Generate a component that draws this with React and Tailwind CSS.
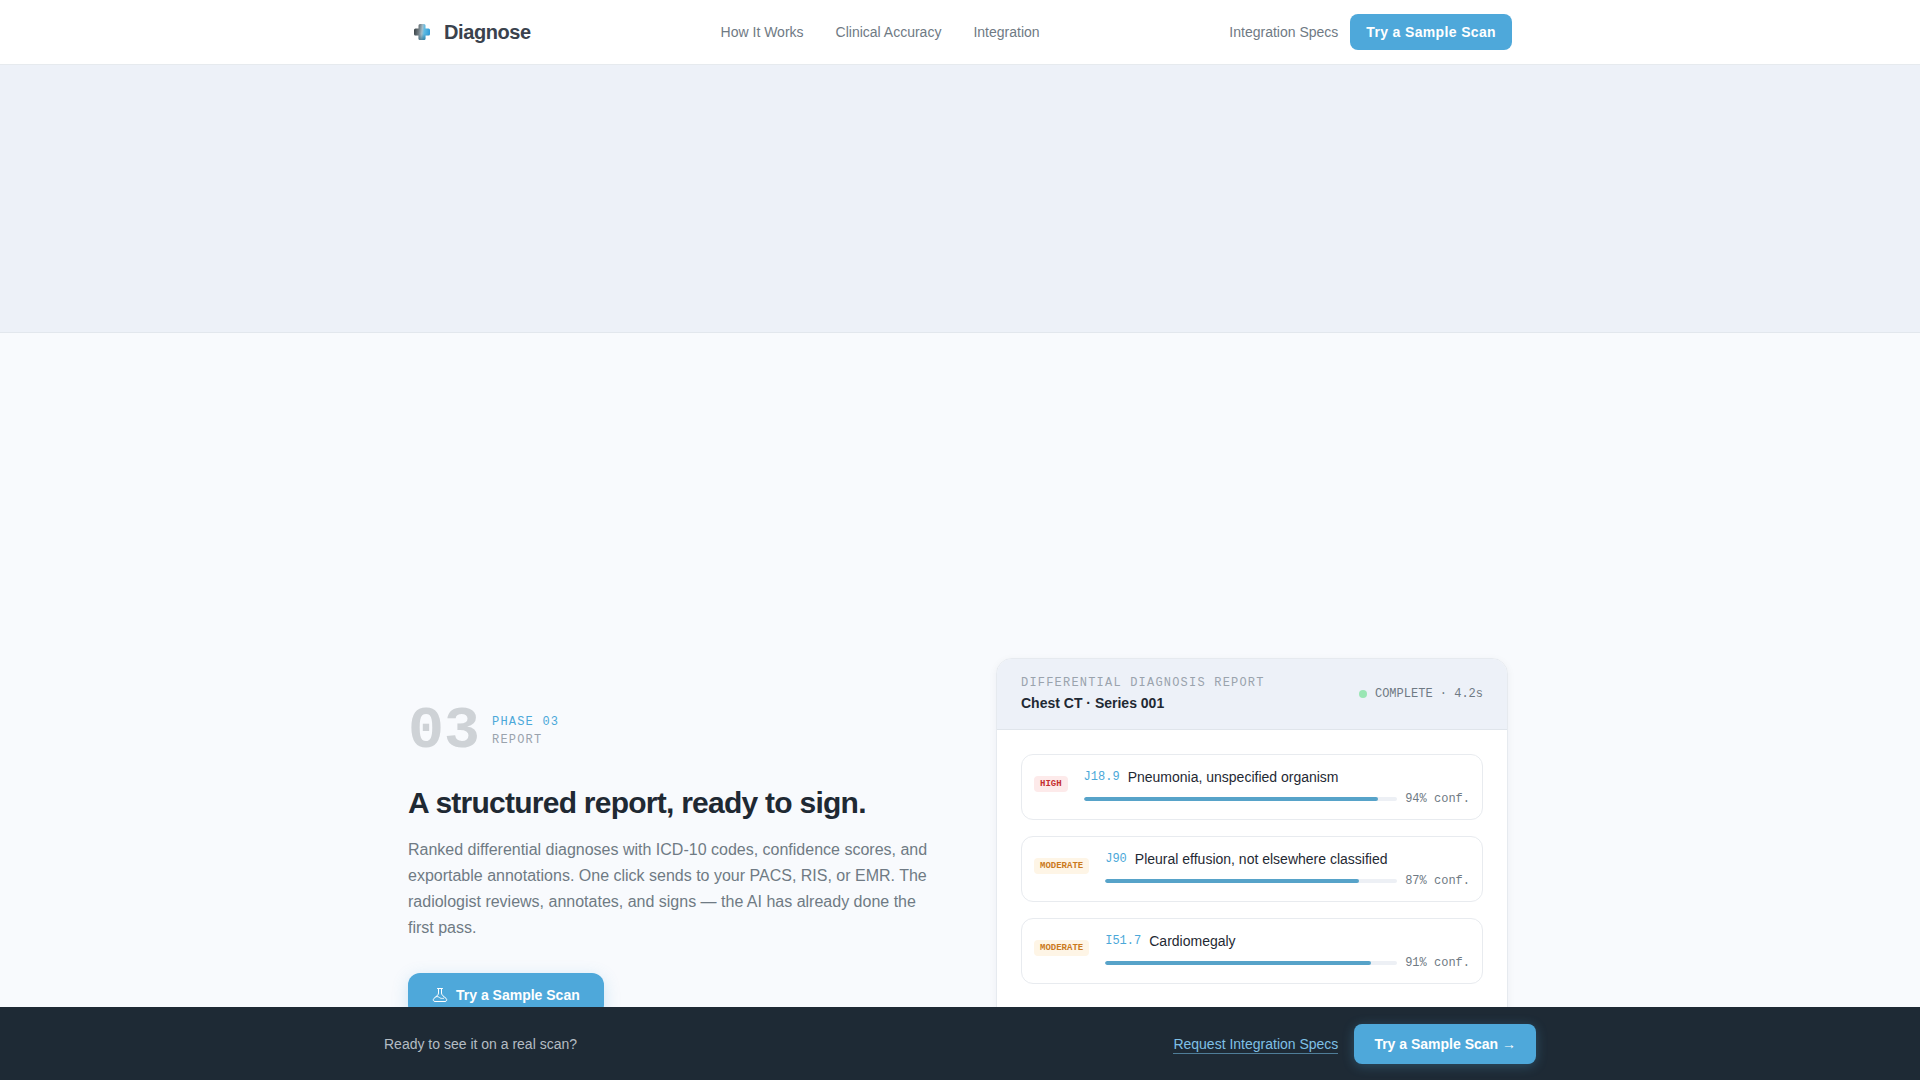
import React from "react";

const NAV_LINKS = ["How It Works", "Clinical Accuracy", "Integration"];

const FINDINGS = [
  { level: "HIGH", code: "J18.9", name: "Pneumonia, unspecified organism", confidence: 94 },
  { level: "MODERATE", code: "J90", name: "Pleural effusion, not elsewhere classified", confidence: 87 },
  { level: "MODERATE", code: "I51.7", name: "Cardiomegaly", confidence: 91 },
];

const BADGE_STYLES = {
  HIGH: "bg-[#fdeaea] text-[#c53030]",
  MODERATE: "bg-[#fef5e6] text-[#cb7a1c]",
};

const CROSS =
  "M12 6h4a1.500 1.500 0 0 1 1.500 1.500v3h3a1.500 1.500 0 0 1 1.500 1.500v4a1.500 1.500 0 0 1-1.500 1.500h-3v3a1.500 1.500 0 0 1-1.500 1.500h-4a1.500 1.500 0 0 1-1.500-1.500v-3h-3a1.500 1.500 0 0 1-1.500-1.500v-4a1.500 1.500 0 0 1 1.500-1.500h3v-3a1.500 1.500 0 0 1 1.500-1.500z";

const LogoMark = () => (
  <svg width="28" height="28" viewBox="0 0 28 28" aria-hidden="true">
    <defs>
      <linearGradient id="mark" x1="6" y1="13" x2="22" y2="15" gradientUnits="userSpaceOnUse">
        <stop offset="0" stopColor="#3d4448" />
        <stop offset="0.3" stopColor="#737f85" />
        <stop offset="0.5" stopColor="#a3bfcc" />
        <stop offset="0.64" stopColor="#5cbbe4" />
        <stop offset="1" stopColor="#2f9bd8" />
      </linearGradient>
      <linearGradient id="shade" x1="0" y1="16" x2="0" y2="22" gradientUnits="userSpaceOnUse">
        <stop offset="0" stopColor="#26617d" stopOpacity="0" />
        <stop offset="1" stopColor="#26617d" stopOpacity="0.6" />
      </linearGradient>
    </defs>
    <path fill="url(#mark)" d={CROSS} />
    <path fill="url(#shade)" d={CROSS} />
  </svg>
);

const FlaskIcon = () => (
  <svg width="16" height="16" viewBox="0 0 16 16" fill="none" stroke="currentColor" strokeLinecap="round" strokeLinejoin="round" aria-hidden="true">
    <path d="M5.500 1.500h5M6.500 1.500v4.500c0 1.500-1 2.500-2.500 3.700L2 11.300c-1.300 1.200-.8 3.200 1 3.200h10c1.800 0 2.300-2 1-3.200l-2-1.600C10.500 8.500 9.500 7.500 9.500 6V1.500" />
    <path d="M4 9.800c1.500-.6 2.500 0 3.500.8s2.500 1 4 .7" />
  </svg>
);

const Finding = ({ level, code, name, confidence }) => (
  <li className="flex items-start gap-4 rounded-xl border border-[#e8ebef] bg-white p-3">
    <span className={`mt-[9px] rounded px-1.5 font-['Liberation_Mono',monospace] text-[9px] leading-4 font-bold ${BADGE_STYLES[level]}`}>
      {level}
    </span>
    <div className="flex-1">
      <div className="flex items-center gap-2">
        <span className="font-['Liberation_Mono',monospace] text-xs text-[#4ba8d9]">{code}</span>
        <span className="text-sm text-[#1f2933]">{name}</span>
      </div>
      <div className="mt-1 flex items-center gap-2">
        <div className="h-1 flex-1 overflow-hidden rounded-full bg-[#edf0f5]">
          <div className="h-full rounded-full bg-[#57a3c9]" style={{ width: `${confidence}%` }} />
        </div>
        <span className="font-['Liberation_Mono',monospace] text-xs text-[#6f7a84]">{confidence}% conf.</span>
      </div>
    </div>
  </li>
);

const App = () => {
  return (
    <div className="flex min-h-screen flex-col bg-[#f8fafd] font-['Liberation_Sans',Arial,sans-serif] text-[#1f2933]">
      {/* Top navigation */}
      <header className="border-b border-[#e6eaee] bg-white">
        <div className="mx-auto flex h-16 max-w-6xl items-center justify-between px-6">
          <a href="#top" className="flex items-center gap-2 text-xl font-bold tracking-[-0.02em] text-[#3a424d]">
            <LogoMark />
            Diagnose
          </a>
          <nav className="flex gap-8">
            {NAV_LINKS.map((label) => (
              <a key={label} href="#section" className="text-sm text-[#6f7a84]">{label}</a>
            ))}
          </nav>
          <div className="flex items-center gap-3">
            <a href="#specs" className="text-sm text-[#6f7a84]">Integration Specs</a>
            <button type="button" className="h-9 rounded-lg bg-[#4ea8da] px-4 text-sm font-bold tracking-wide text-white">
              Try a Sample Scan
            </button>
          </div>
        </div>
      </header>

      <section className="h-[268px] border-b border-[#e2e7ed] bg-[#edf1f8]" />

      {/* Phase 03 */}
      <section className="mx-auto w-full max-w-6xl px-6 pt-[325px]">
        <div className="grid grid-cols-2 items-center gap-16">
          <div>
            <div className="flex items-center gap-3 font-['Liberation_Mono',monospace]">
              <span className="text-6xl leading-none font-bold text-[#ced2d6]">03</span>
              <div className="text-xs leading-[18px] tracking-widest">
                <div className="text-[#4ba8d9]">PHASE 03</div>
                <div className="text-[#9aa3ad]">REPORT</div>
              </div>
            </div>
            <h2 className="mt-6 text-3xl leading-9 font-bold tracking-tight">A structured report, ready to sign.</h2>
            <p className="mt-4 text-base leading-[26px] text-[#6f7a84]">
              Ranked differential diagnoses with ICD-10 codes, confidence scores, and exportable annotations. One click
              sends to your PACS, RIS, or EMR. The radiologist reviews, annotates, and signs — the AI has already done
              the first pass.
            </p>
            <button type="button" className="mt-8 flex h-11 items-center gap-2 rounded-xl bg-[#4ea8da] px-6 text-sm font-bold text-white shadow-[0_4px_16px_rgba(78,168,218,0.25)]">
              <FlaskIcon />
              Try a Sample Scan
            </button>
          </div>

          <div className="mx-auto w-full max-w-lg overflow-hidden rounded-2xl border border-[#e6eaef] bg-white shadow-[0_2px_8px_rgba(31,41,51,0.05)]">
            <div className="flex items-center justify-between border-b border-[#e0e5eb] bg-[#edf1f8] px-6 py-4">
              <div>
                <div className="font-['Liberation_Mono',monospace] text-xs tracking-widest text-[#9aa3ad]">
                  DIFFERENTIAL DIAGNOSIS REPORT
                </div>
                <h3 className="mt-0.5 text-sm font-bold">Chest CT · Series 001</h3>
              </div>
              <div className="flex items-center gap-2 font-['Liberation_Mono',monospace] text-xs text-[#6f7a84]">
                <span className="size-2 rounded-full bg-[#9ae6b4]" />
                COMPLETE · 4.2s
              </div>
            </div>
            <ul className="flex flex-col gap-4 px-6 pt-6 pb-[75px]">
              {FINDINGS.map((finding) => (
                <Finding key={finding.code} {...finding} />
              ))}
            </ul>
          </div>
        </div>
      </section>

      {/* Sticky call to action */}
      <div className="fixed inset-x-0 bottom-0 border-t border-[#1e2a35] bg-[#1e2a35]">
        <div className="mx-auto flex max-w-[1200px] items-center justify-between px-6 py-4">
          <p className="text-sm text-[#b4bcc3]">Ready to see it on a real scan?</p>
          <div className="flex items-center gap-4">
            <a href="#specs" className="border-b border-[#4f7d98] text-sm leading-[18px] text-[#7fc0e6]">Request Integration Specs</a>
            <button type="button" className="h-10 rounded-lg bg-[#4ea8da] px-5 text-sm font-bold text-white shadow-[0_2px_12px_rgba(78,168,218,0.3)]">
              Try a Sample Scan →
            </button>
          </div>
        </div>
      </div>
    </div>
  );
};

export default App;
